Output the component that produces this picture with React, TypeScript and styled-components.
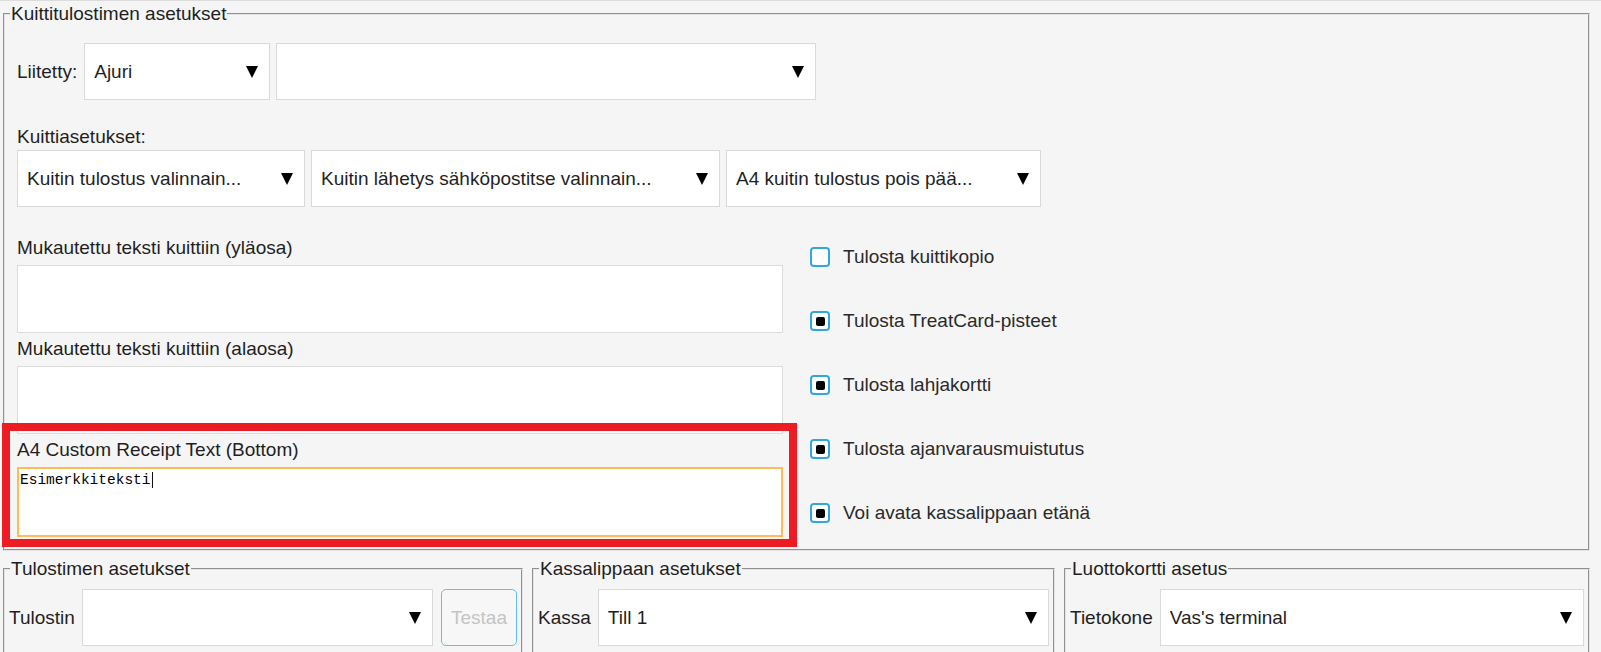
import styled, { createGlobalStyle } from 'styled-components';

const GlobalStyle = createGlobalStyle`
  html, body {
    margin: 0;
    padding: 0;
    overflow: hidden;
    background: #f5f5f5;
  }
  body {
    font-family: "Liberation Sans", Arial, sans-serif;
    font-size: 19px;
    color: #1f1f1f;
  }
`;

const Page = styled.div`
  width: 1601px;
  height: 652px;
  box-sizing: border-box;
  border-top: 1px solid #dcdcdc;
  padding: 2px 11px 0 3px;
  overflow: hidden;
`;

const Group = styled.fieldset<{ $compact?: boolean }>`
  margin: 0;
  min-width: 0;
  border: 2px groove #e4e4e4;
  padding: ${(p) => (p.$compact ? '0 4px 12px 4px' : '0 14px 12px 12px')};
`;

const Legend = styled.legend<{ $compact?: boolean }>`
  margin-left: ${(p) => (p.$compact ? '1px' : '-7px')};
  padding: 0 1px;
  line-height: 22px;
`;

const Row = styled.div<{ $top?: number }>`
  display: flex;
  align-items: center;
  gap: 6px;
  margin-top: ${(p) => p.$top ?? 0}px;
`;

const InlineLabel = styled.span`
  flex: none;
  line-height: 22px;
  margin-right: 1px;
`;

const SectionLabel = styled.div`
  line-height: 22px;
  margin: 26px 0 2px;
`;

const Select = styled.div<{ $width?: number }>`
  box-sizing: border-box;
  height: 57px;
  width: ${(p) => (p.$width ? `${p.$width}px` : 'auto')};
  flex: ${(p) => (p.$width ? 'none' : '1')};
  min-width: 0;
  display: flex;
  align-items: center;
  padding: 0 11px 0 9px;
  background: #fff;
  border: 1px solid #d9d9d9;
`;

const SelectValue = styled.span`
  flex: 1;
  white-space: nowrap;
  overflow: hidden;
`;

const Arrow = styled.span`
  flex: none;
  width: 0;
  height: 0;
  border-left: 6.5px solid transparent;
  border-right: 6.5px solid transparent;
  border-top: 12px solid #000;
`;

const Columns = styled.div`
  display: grid;
  grid-template-columns: 766px 1fr;
  column-gap: 27px;
  margin-top: 30px;
`;

const TextColumn = styled.div`
  display: flex;
  flex-direction: column;
  gap: 5px;
`;

const TextBlock = styled.div<{ $highlighted?: boolean }>`
  position: relative;

  &::after {
    content: '';
    display: ${(p) => (p.$highlighted ? 'block' : 'none')};
    position: absolute;
    top: -16px;
    left: -15px;
    right: -14px;
    bottom: -10px;
    border: 8px solid #ed1c24;
    pointer-events: none;
  }
`;

const FieldLabel = styled.div`
  line-height: 22px;
  margin-bottom: 6px;
`;

const TextBox = styled.div<{ $focused?: boolean }>`
  box-sizing: border-box;
  height: ${(p) => (p.$focused ? 70 : 68)}px;
  background: #fff;
  border: ${(p) => (p.$focused ? '2px solid #ffbb55' : '1px solid #dcdcdc')};
  padding: 3px 1px;
  font-family: "Liberation Mono", "Courier New", monospace;
  font-size: 14.5px;
  line-height: 17px;
  color: #000;
`;

const Typed = styled.span`
  padding-right: 1px;
  border-right: 1px solid #111;
`;

const CheckList = styled.div`
  display: flex;
  flex-direction: column;
  gap: 42px;
  padding-top: 9px;
`;

const CheckRow = styled.label`
  display: flex;
  align-items: center;
  gap: 13px;
  line-height: 22px;
  color: #2a2a2a;
`;

const Box = styled.span<{ $checked: boolean }>`
  flex: none;
  box-sizing: border-box;
  width: 20px;
  height: 20px;
  border: 2px solid #2fa8e0;
  border-radius: 4px;
  background: #fff;
  display: flex;
  align-items: center;
  justify-content: center;

  &::after {
    content: '';
    display: ${(p) => (p.$checked ? 'block' : 'none')};
    width: 9px;
    height: 9px;
    border-radius: 2px;
    background: #000;
  }
`;

const BottomGrid = styled.div`
  display: grid;
  grid-template-columns: 520px 523px 1fr;
  gap: 9px;
  margin-top: 7px;
`;

const TestButton = styled.button`
  flex: none;
  box-sizing: border-box;
  width: 76px;
  height: 57px;
  margin-left: 2px;
  border: 1.5px solid #5fc2ee;
  border-radius: 5px;
  background: #f7f7f7;
  color: #c4c4c4;
  font: inherit;
  padding: 0;
`;

const checks = [
  { label: 'Tulosta kuittikopio', checked: false },
  { label: 'Tulosta TreatCard-pisteet', checked: true },
  { label: 'Tulosta lahjakortti', checked: true },
  { label: 'Tulosta ajanvarausmuistutus', checked: true },
  { label: 'Voi avata kassalippaan etänä', checked: true },
];

const Dropdown = ({ value = '', width }: { value?: string; width?: number }) => (
  <Select $width={width}>
    <SelectValue>{value}</SelectValue>
    <Arrow />
  </Select>
);

export default function App() {
  return (
    <>
      <GlobalStyle />
      <Page>
        <Group>
          <Legend>Kuittitulostimen asetukset</Legend>
          <Row $top={18}>
            <InlineLabel>Liitetty:</InlineLabel>
            <Dropdown value="Ajuri" width={186} />
            <Dropdown width={540} />
          </Row>
          <SectionLabel>Kuittiasetukset:</SectionLabel>
          <Row>
            <Dropdown value="Kuitin tulostus valinnain..." width={288} />
            <Dropdown value="Kuitin lähetys sähköpostitse valinnain..." width={409} />
            <Dropdown value="A4 kuitin tulostus pois pää..." width={315} />
          </Row>
          <Columns>
            <TextColumn>
              <TextBlock>
                <FieldLabel>Mukautettu teksti kuittiin (yläosa)</FieldLabel>
                <TextBox />
              </TextBlock>
              <TextBlock>
                <FieldLabel>Mukautettu teksti kuittiin (alaosa)</FieldLabel>
                <TextBox />
              </TextBlock>
              <TextBlock $highlighted>
                <FieldLabel>A4 Custom Receipt Text (Bottom)</FieldLabel>
                <TextBox $focused>
                  <Typed>Esimerkkiteksti</Typed>
                </TextBox>
              </TextBlock>
            </TextColumn>
            <CheckList>
              {checks.map((c) => (
                <CheckRow key={c.label}>
                  <Box $checked={c.checked} />
                  {c.label}
                </CheckRow>
              ))}
            </CheckList>
          </Columns>
        </Group>
        <BottomGrid>
          <Group $compact>
            <Legend $compact>Tulostimen asetukset</Legend>
            <Row $top={9}>
              <InlineLabel>Tulostin</InlineLabel>
              <Dropdown />
              <TestButton>Testaa</TestButton>
            </Row>
          </Group>
          <Group $compact>
            <Legend $compact>Kassalippaan asetukset</Legend>
            <Row $top={9}>
              <InlineLabel>Kassa</InlineLabel>
              <Dropdown value="Till 1" />
            </Row>
          </Group>
          <Group $compact>
            <Legend $compact>Luottokortti asetus</Legend>
            <Row $top={9}>
              <InlineLabel>Tietokone</InlineLabel>
              <Dropdown value="Vas's terminal" />
            </Row>
          </Group>
        </BottomGrid>
      </Page>
    </>
  );
}
